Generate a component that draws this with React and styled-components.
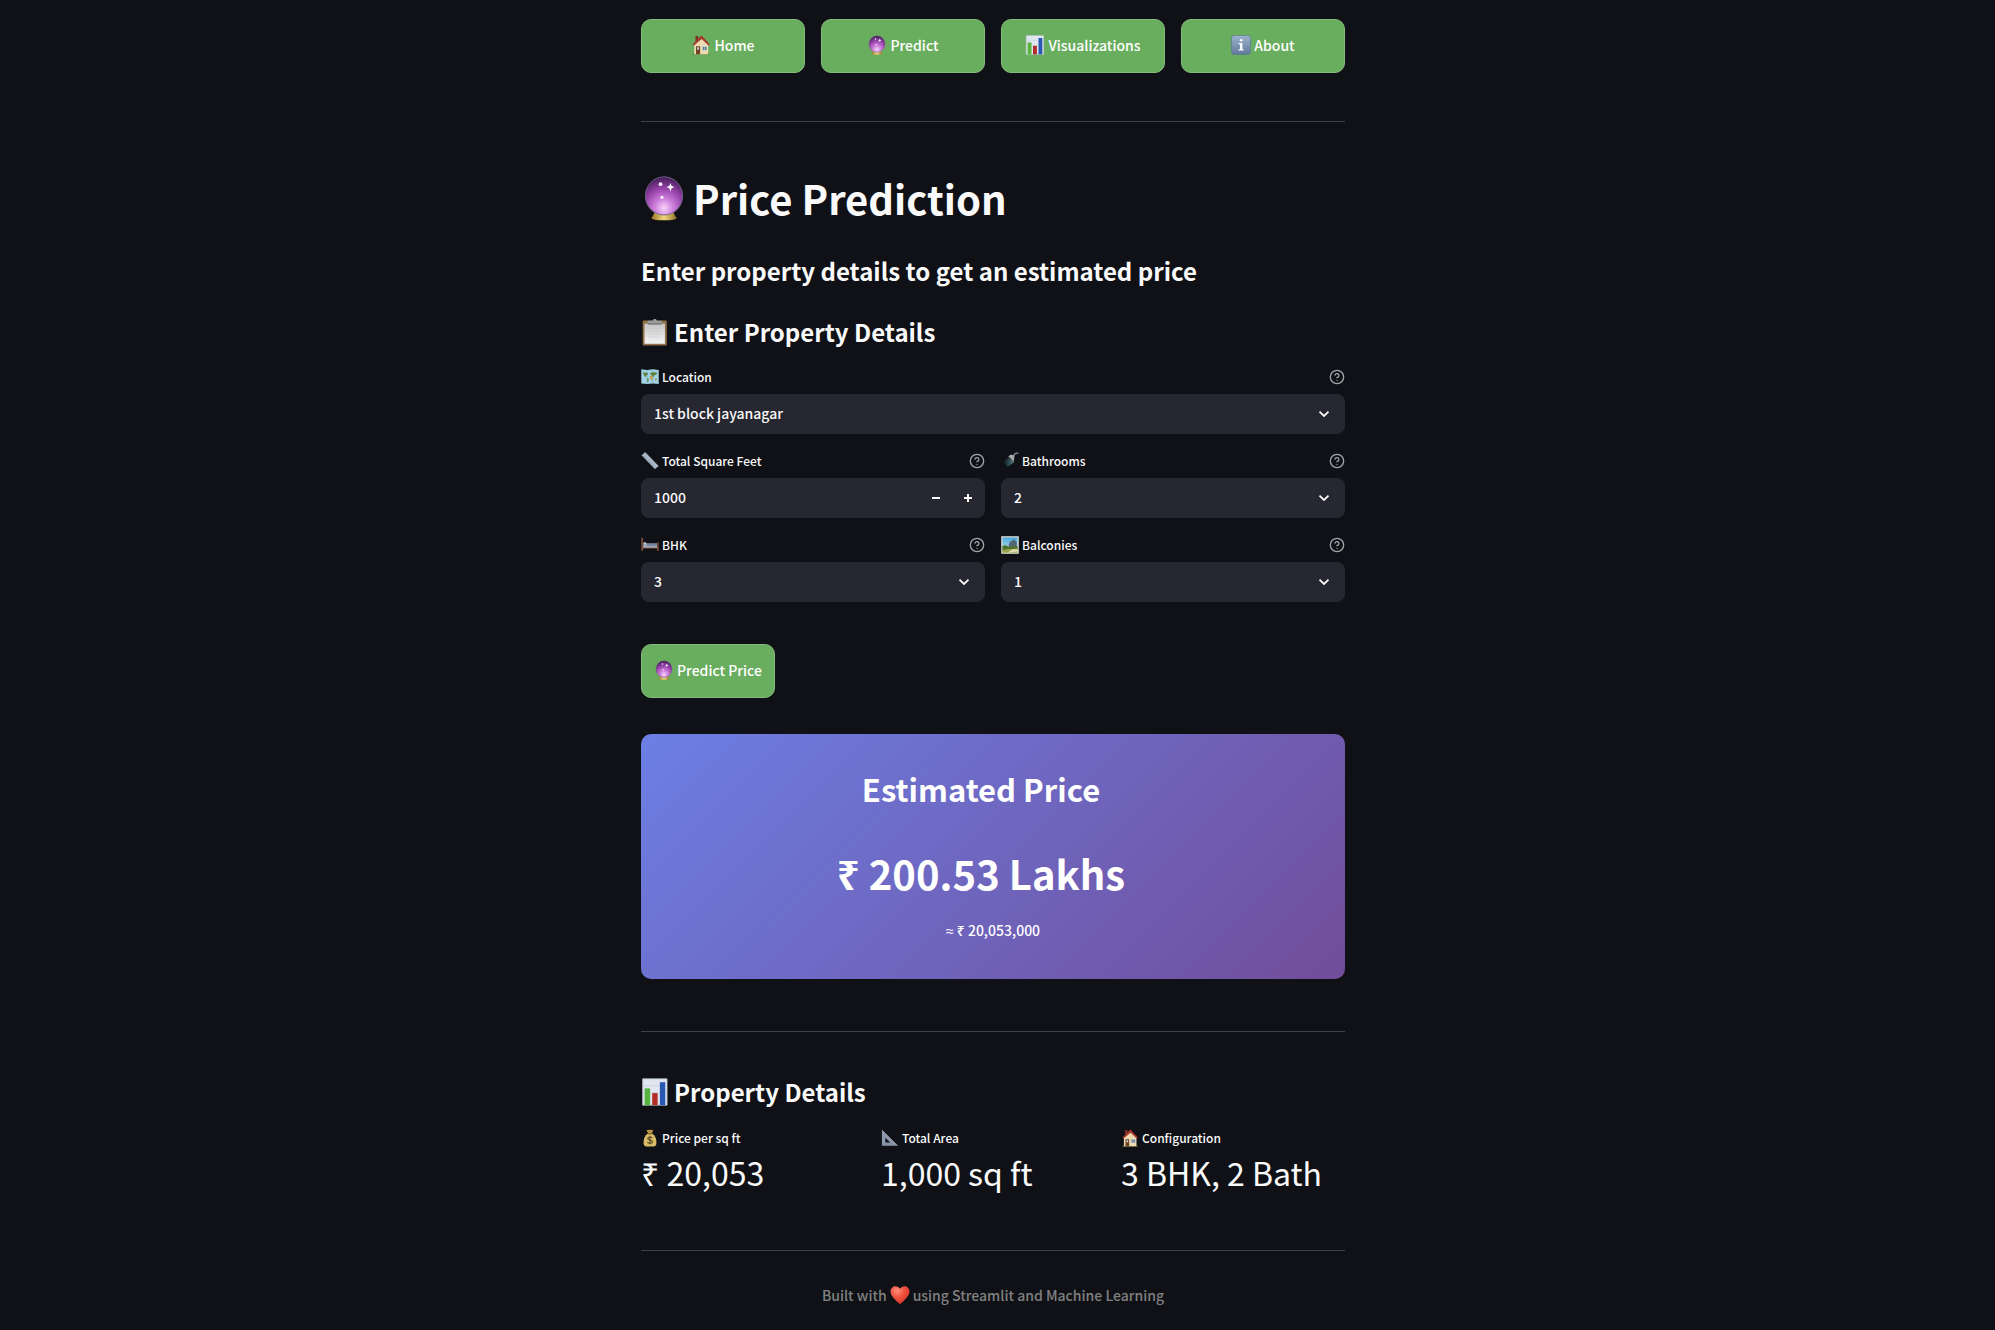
import React, { useState } from "react";
import styled, { createGlobalStyle } from "styled-components";
import { CircleQuestionMark } from "lucide-react";

const GlobalStyle = createGlobalStyle`
  *, *::before, *::after { box-sizing: border-box; }
  body {
    margin: 0;
    background: #0f1116;
    color: #fafafa;
    font-family: "Noto Sans CJK JP", "Noto Sans", sans-serif;
    font-size: 14px;
    line-height: 24px;
    font-weight: 500;
  }
  h1, h2, h3, p, dl, dd { margin: 0; }
  button, input, select { font: inherit; color: inherit; margin: 0; }
`;

const Page = styled.div`
  padding: 19px 25px 23px 16px;
`;

const Content = styled.main`
  max-width: 704px;
  margin: 0 auto;
`;

const Nav = styled.nav`
  display: grid;
  grid-template-columns: repeat(4, 1fr);
  gap: 16px;
`;

const Button = styled.button`
  display: flex;
  align-items: center;
  justify-content: center;
  gap: 3px;
  height: 54px;
  padding: 0 12px 2px;
  border: 1px solid #86ba7e;
  border-radius: 10px;
  background: #69ad5e;
  color: #fff;
  cursor: pointer;
`;

const Divider = styled.hr`
  height: 1px;
  border: 0;
  margin: ${(p) => p.$before}px 0 ${(p) => p.$after}px;
  background: #3e4044;
`;

const Title = styled.h1`
  display: flex;
  align-items: center;
  gap: 6px;
  font-size: 40px;
  line-height: 52px;
  font-weight: 700;
`;

const Heading = styled.h3`
  display: flex;
  align-items: center;
  gap: 5px;
  margin-top: ${(p) => p.$before || 0}px;
  font-size: 24px;
  line-height: 34px;
  font-weight: 700;
`;

const Form = styled.form`
  display: flex;
  flex-direction: column;
  align-items: flex-start;
  margin-top: 16px;
`;

const Fields = styled.div`
  display: grid;
  grid-template-columns: 1fr 1fr;
  gap: 15px 16px;
  width: 100%;
  margin-bottom: 42px;
`;

const Field = styled.div`
  grid-column: ${(p) => (p.$wide ? "1 / -1" : "auto")};
  display: flex;
  flex-direction: column;
  gap: 5px;
`;

const LabelRow = styled.div`
  display: flex;
  align-items: center;
  justify-content: space-between;
`;

const Label = styled.label`
  display: flex;
  align-items: center;
  gap: 3px;
  font-size: 12px;
  line-height: 24px;
`;

const HelpButton = styled.button`
  display: flex;
  padding: 0;
  border: 0;
  background: none;
  color: #a3a4a8;
`;

const Control = styled.div`
  display: grid;
  grid-template-columns: 1fr 32px 32px;
  height: 40px;
  border-radius: 8px;
  background: #262730;
  overflow: hidden;
`;

const Select = styled.select`
  grid-area: 1 / 1 / 2 / -1;
  appearance: none;
  padding: 0 40px 2px 13px;
  border: 0;
  background: none;
  option { background: #262730; }
`;

const Chevron = styled.svg`
  grid-area: 1 / 1 / 2 / -1;
  justify-self: end;
  align-self: center;
  margin-right: 15px;
  pointer-events: none;
`;

const NumberInput = styled.input`
  min-width: 0;
  padding: 0 0 2px 13px;
  border: 0;
  background: none;
  outline: 0;
`;

const StepButton = styled.button`
  display: flex;
  align-items: center;
  justify-content: center;
  padding: 0 2px 0 0;
  border: 0;
  background: none;
`;

const ResultCard = styled.section`
  display: flex;
  flex-direction: column;
  margin-top: 36px;
  padding: 33px 32px 37px;
  border-radius: 10px;
  background: linear-gradient(135deg, #6c7fe4 0%, #714d9a 100%);
  color: #fff;
  text-align: center;
`;

const ResultTitle = styled.h2`
  padding-right: 24px;
  font-size: 31px;
  line-height: 44px;
  font-weight: 700;
`;

const ResultValue = styled.p`
  margin: 36px 0 19px;
  padding-right: 24px;
  font-size: 40px;
  line-height: 52px;
  font-weight: 700;
`;

const Approx = styled.span`
  font-family: "Noto Sans", sans-serif;
  line-height: 16px;
`;

const Metrics = styled.dl`
  display: grid;
  grid-template-columns: repeat(3, 1fr);
  gap: 16px;
  margin-top: 17px;
`;

const MetricLabel = styled.dt`
  display: flex;
  align-items: center;
  gap: 3px;
  font-size: 12px;
  line-height: 24px;
`;

const MetricValue = styled.dd`
  font-size: 32px;
  line-height: 44px;
  font-weight: 400;
  white-space: nowrap;
`;

const Footer = styled.footer`
  display: flex;
  align-items: center;
  justify-content: center;
  gap: 3px;
  color: #808080;
`;

const GradientStore = styled.svg`
  display: block;
  width: 0;
  height: 0;
`;

const EmojiSvg = styled.svg`
  flex: none;
  width: ${(p) => p.$size}px;
  height: ${(p) => p.$size}px;
`;

function Gradients() {
  return (
    <GradientStore aria-hidden="true">
      <defs>
        <radialGradient id="orb" cx="50%" cy="82%" r="78%">
          <stop offset="0" stopColor="#f6d3fb" />
          <stop offset="0.3" stopColor="#cf83dd" />
          <stop offset="0.65" stopColor="#9a45ac" />
          <stop offset="1" stopColor="#4c2160" />
        </radialGradient>
        <linearGradient id="gold">
          <stop offset="0" stopColor="#9c7428" />
          <stop offset="0.5" stopColor="#f0d77c" />
          <stop offset="1" stopColor="#93702a" />
        </linearGradient>
        <linearGradient id="slate" x2="0" y2="1">
          <stop offset="0" stopColor="#9db3cf" />
          <stop offset="1" stopColor="#61799a" />
        </linearGradient>
        <linearGradient id="paper" x2="0" y2="1">
          <stop offset="0" stopColor="#c4c4c4" />
          <stop offset="1" stopColor="#f4f4f4" />
        </linearGradient>
        <linearGradient id="sky" x2="0" y2="1">
          <stop offset="0" stopColor="#4ba8dc" />
          <stop offset="1" stopColor="#d3eef3" />
        </linearGradient>
        <linearGradient id="water" x2="1" y2="0">
          <stop offset="0" stopColor="#1a3d49" stopOpacity="0.3" />
          <stop offset="1" stopColor="#57808a" />
        </linearGradient>
        <radialGradient id="heart" cx="35%" cy="25%" r="80%">
          <stop offset="0" stopColor="#ff8d78" />
          <stop offset="0.5" stopColor="#ee4f3c" />
          <stop offset="1" stopColor="#d93425" />
        </radialGradient>
      </defs>
    </GradientStore>
  );
}

const drawings = {
  house: (
    <>
      <path d="M1.3 18.6h17.4v.9H1.3z" fill="#6f7d35" />
      <path d="M4.5 1h2.7v5H4.5z" fill="#7c3028" />
      <path d="M3.2 9.2 10.6 3l6.6 6.2v10H3.2z" fill="#ecd9b2" />
      <path d="M1.6 9.4 9.5 1.3c.6-.5 1.2-.5 1.8 0l7.5 8.1-1.2 1.2-7-6.5-7.7 6.5z" fill="#a4382c" />
      <path d="M5 11.3h4.1v7.9H5z" fill="#70401f" />
      <path d="M6 12.3h2v2.5H6z" fill="#b6cad0" />
      <path d="M11.3 11.3h4.7v4.3h-4.7z" fill="#5d8196" stroke="#f9f1dc" strokeWidth=".6" />
      <path d="M13.6 11.3v4.3" stroke="#d8e3e4" strokeWidth=".5" />
    </>
  ),
  orb: (
    <>
      <path d="M6 16.2h8l1.5 2.7c-1.8 1.1-9.2 1.1-11 0z" fill="url(#gold)" />
      <ellipse cx="10" cy="9.1" rx="8.1" ry="8.3" fill="url(#orb)" stroke="#6f6386" strokeWidth=".4" />
      <path d="m12.8 3.5.5 1.3 1.3.4-1.3.6-.5 1.4-.5-1.4-1.3-.6 1.3-.4z" fill="#fff" />
      <circle cx="8.5" cy="4" r=".8" fill="#fbe9ff" />
      <circle cx="9.1" cy="9.7" r=".7" fill="#fbe9ff" />
    </>
  ),
  chart: (
    <>
      <path d="M1.2.6h17.4v18.8H1.2z" fill="#dfe6ef" stroke="#bec6cf" strokeWidth=".6" />
      <path d="M1.4 5.5h17M1.4 10.5h17M1.4 15h17" stroke="#c3ccd8" strokeWidth=".4" />
      <path d="M2.6 7.4h3.9v12H2.6z" fill="#55b53c" />
      <path d="M8 10.8h3.9v8.6H8z" fill="#b12d28" />
      <path d="M13.5 3h3.8v16.4h-3.8z" fill="#2858b4" />
    </>
  ),
  info: (
    <>
      <rect x=".4" y=".4" width="19.2" height="19.2" rx="3" fill="url(#slate)" stroke="#56708f" strokeWidth=".6" />
      <circle cx="10.2" cy="5.2" r="1.3" fill="#fff" />
      <path d="M7.6 8h3.8v6.3h1.3v1.2H7.5v-1.2h1.6V9.2H7.6z" fill="#fff" />
    </>
  ),
  clipboard: (
    <>
      <rect x="1.2" y="1.7" width="17.2" height="18" rx=".8" fill="#937148" />
      <path d="M2.5 4h14.6v14.4H2.5z" fill="url(#paper)" />
      <path d="M5 7.5h9M5 9.5h9M5 11.5h9M5 13.5h7" stroke="#c2c2c2" strokeWidth=".35" />
      <path d="M4.8 2h3.6C8.5.3 11.2.3 11.3 2h3.5v2.4h-10z" fill="#9c9da0" />
      <path d="M4.8 3.9h10v.7h-10z" fill="#606266" />
    </>
  ),
  map: (
    <>
      <path d="m.3 1.5 6.5.6 6.4-.6 6.5.6v15.8l-6.5-.6-6.4.6-6.5-.6z" fill="#9fd3e3" />
      <path d="M6.8 2.1v15.8M13.2 1.5v15.8" stroke="#6fa9bf" strokeWidth=".6" />
      <path d="m2 5 5 .3 1 2-2 .6-.5 2.6L3 7.7zM7 11l1.7 1-.9 4-1-2zM9.8 6.1l2.5-1.5 5.6.5-.8 2.4-2.4.5-.8 2.2-1.6-1.7z" fill="#637f37" />
      <path d="m9.8 8.8 2.7.2.7 2-1.7 3.7-1.2-3.5z" fill="#c09a41" />
      <path d="m15.3 12 2.1-.3.4 1.6-2 .5z" fill="#a4913d" />
    </>
  ),
  ruler: (
    <>
      <path d="M.8 3.5 4.5.6 19.2 15.7l-3.7 3.2z" fill="#a7b5c7" stroke="#8293a9" strokeWidth=".5" />
      <path d="m3 5.8 1.4-1.1M5.3 8.2l1.4-1.1m.9 3.5L9 9.5m.9 3.5 1.4-1.1m.9 3.5 1.4-1.1" stroke="#65788e" strokeWidth=".6" />
      <path d="M4.5.6 19.2 15.7" stroke="#dce4ea" strokeWidth=".7" />
    </>
  ),
  shower: (
    <>
      <path d="m8.3 6.4 5.5 5.6-6.5 4.3-4.9-5.6z" fill="url(#water)" />
      <path d="M19.4 1.5c-3-.7-4.7.8-5.3 3.1" fill="none" stroke="#8d9291" strokeWidth="1.4" />
      <path d="M8.2 5c2-2.4 4.5-2.6 6.8-.4l-1 7.5z" fill="#a5aaa8" />
      <path d="m8.2 5 6.1 6.3" stroke="#464e4e" strokeWidth="1" />
    </>
  ),
  bed: (
    <>
      <path d="M.4 2v14.5h1.8v-2.7h15.6v2.7h1.8V7h-1.6v4.3H2.1V2z" fill="#83513a" />
      <path d="M2.5 8.3h15.3V13H2.5z" fill="#a2adbf" />
      <path d="M2.5 7.5c1.8-1.2 3.3-.7 3.9 1.2H2.5z" fill="#dde0e5" />
      <path d="M6.6 8.5h11.2v2.7H6.6z" fill="#76869e" />
    </>
  ),
  picture: (
    <>
      <path d="M.3.3h19.4v19.4H.3z" fill="#f2efe0" />
      <path d="M1.5 1.5h17v17h-17z" fill="url(#sky)" />
      <path d="m8.7 9 1.6-3 2-.8 2-2 1.6 2 1.7 1v10H8.7z" fill="#53677b" />
      <path d="M1.5 11c4-1.6 5 0 7 1 3-1.3 5.5-1.8 10-.5v5h-17z" fill="#50712f" />
      <path d="M1.5 16c4-2 9-1 17-2v4.5h-17z" fill="#9aa650" />
      <path d="m7 18.5 6-3.7 5.5-.2v2.5z" fill="#e5dfb2" />
    </>
  ),
  bag: (
    <>
      <path d="M6 1c1.7.7 2.2-.7 3.7 0 1.3-.7 2.2.5 4-.1L12 5H8z" fill="#bb9544" />
      <path d="M7.7 5h4.6c3.7 2.2 5.2 6.4 4.8 11-.3 3.3-2.3 3.5-7.1 3.5S3.2 19.3 2.9 16C2.5 11.4 4 7.2 7.7 5z" fill="#dabb68" />
      <path d="M7.3 5.4h5.5" stroke="#84632d" strokeWidth="1.1" />
      <path d="M12.6 10c-1-1.6-5.1-1.4-5.1.6 0 2.3 5.3 1.2 5.3 3.6 0 2.2-4.5 2.3-5.7.3M10 7.7V17" fill="none" stroke="#594b27" strokeWidth="1.3" />
    </>
  ),
  triangle: (
    <>
      <path fillRule="evenodd" d="M1 1v17.500h17.500zm3.800 8.600 5.600 5.300H4.800z" fill="#8c97ac" />
      <path d="m1 1 17.500 17.500" stroke="#c5ccd9" strokeWidth=".6" />
      <path d="M2.8 17.3v-1.6m2.5 1.6v-1.6m2.5 1.6v-1.6m2.5 1.6v-1.6m2.5 1.6v-1.6" stroke="#59677e" strokeWidth=".5" />
    </>
  ),
  heart: (
    <path
      d="M10 19.3C6 15.7.5 11.3.5 6.3.5 1.100 7.200-.9 10 3.800c2.800-4.700 9.500-2.700 9.500 2.500 0 5-5.500 9.400-9.500 13z"
      fill="url(#heart)"
    />
  ),
};

function Emoji({ name, size = 20 }) {
  return (
    <EmojiSvg $size={size} viewBox="0 0 20 20" aria-hidden="true">
      {drawings[name]}
    </EmojiSvg>
  );
}

function FieldShell({ id, icon, label, wide, children }) {
  return (
    <Field $wide={wide}>
      <LabelRow>
        <Label htmlFor={id}>
          <Emoji name={icon} size={18} />
          {label}
        </Label>
        <HelpButton type="button" aria-label={`Help for ${label}`}>
          <CircleQuestionMark size={16} />
        </HelpButton>
      </LabelRow>
      <Control>{children}</Control>
    </Field>
  );
}

function SelectField({ options, initial, ...shell }) {
  const [value, setValue] = useState(initial);
  return (
    <FieldShell {...shell}>
      <Select id={shell.id} value={value} onChange={(e) => setValue(e.target.value)}>
        {options.map((option) => (
          <option key={option}>{option}</option>
        ))}
      </Select>
      <Chevron width="12" height="12" viewBox="0 0 12 12" aria-hidden="true">
        <path d="m1.5 3.7 4.5 4.3 4.5-4.3" fill="none" stroke="#fafafa" strokeWidth="1.8" />
      </Chevron>
    </FieldShell>
  );
}

function AreaField() {
  const [area, setArea] = useState(1000);
  return (
    <FieldShell id="area" icon="ruler" label="Total Square Feet">
      <NumberInput
        id="area"
        inputMode="numeric"
        value={area}
        onChange={(e) => setArea(Number(e.target.value) || 0)}
      />
      <StepButton type="button" aria-label="Decrease" onClick={() => setArea(area - 1)}>
        <svg width="8" height="8" viewBox="0 0 8 8">
          <path d="M0 4h8" stroke="#fafafa" strokeWidth="2" />
        </svg>
      </StepButton>
      <StepButton type="button" aria-label="Increase" onClick={() => setArea(area + 1)}>
        <svg width="8" height="8" viewBox="0 0 8 8">
          <path d="M0 4h8M4 0v8" stroke="#fafafa" strokeWidth="2" />
        </svg>
      </StepButton>
    </FieldShell>
  );
}

const pages = [
  ["house", "Home"],
  ["orb", "Predict"],
  ["chart", "Visualizations"],
  ["info", "About"],
];

const metrics = [
  ["bag", "Price per sq ft", "₹ 20,053"],
  ["triangle", "Total Area", "1,000 sq ft"],
  ["house", "Configuration", "3 BHK, 2 Bath"],
];

const counts = ["1", "2", "3", "4", "5"];

export default function App() {
  return (
    <Page>
      <GlobalStyle />
      <Gradients />
      <Content>
        <Nav>
          {pages.map(([icon, label]) => (
            <Button key={label} type="button">
              <Emoji name={icon} />
              {label}
            </Button>
          ))}
        </Nav>
        <Divider $before={48} $after={50} />

        <Title>
          <Emoji name="orb" size={46} />
          Price Prediction
        </Title>
        <Heading $before={30}>Enter property details to get an estimated price</Heading>
        <Heading $before={27}>
          <Emoji name="clipboard" size={28} />
          Enter Property Details
        </Heading>

        <Form onSubmit={(e) => e.preventDefault()}>
          <Fields>
            <SelectField
              wide
              id="location"
              icon="map"
              label="Location"
              initial="1st block jayanagar"
              options={["1st block jayanagar"]}
            />
            <AreaField />
            <SelectField id="bathrooms" icon="shower" label="Bathrooms" initial="2" options={counts} />
            <SelectField id="bhk" icon="bed" label="BHK" initial="3" options={counts} />
            <SelectField id="balconies" icon="picture" label="Balconies" initial="1" options={counts} />
          </Fields>
          <Button type="submit">
            <Emoji name="orb" />
            Predict Price
          </Button>
        </Form>

        <ResultCard>
          <ResultTitle>Estimated Price</ResultTitle>
          <ResultValue>₹ 200.53 Lakhs</ResultValue>
          <p>
            <Approx>≈</Approx> ₹ 20,053,000
          </p>
        </ResultCard>
        <Divider $before={52} $after={43} />

        <Heading>
          <Emoji name="chart" size={28} />
          Property Details
        </Heading>
        <Metrics>
          {metrics.map(([icon, label, value]) => (
            <div key={label}>
              <MetricLabel>
                <Emoji name={icon} size={18} />
                {label}
              </MetricLabel>
              <MetricValue>{value}</MetricValue>
            </div>
          ))}
        </Metrics>
        <Divider $before={56} $after={32} />

        <Footer>
          Built with
          <Emoji name="heart" />
          using Streamlit and Machine Learning
        </Footer>
      </Content>
    </Page>
  );
}
